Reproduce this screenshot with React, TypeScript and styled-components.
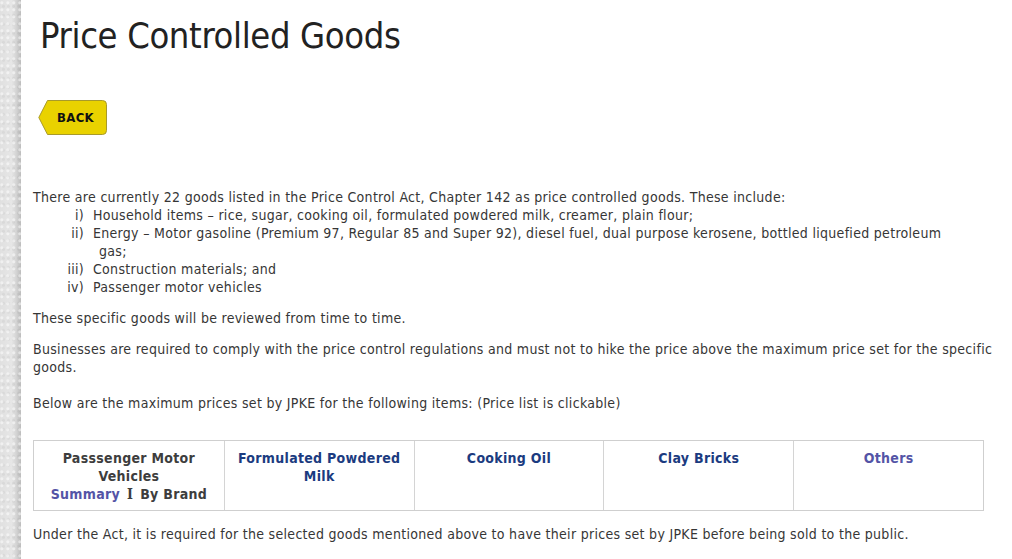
import React from "react";
import styled, { createGlobalStyle } from "styled-components";

const Global = createGlobalStyle`
  html, body { margin: 0; padding: 0; background: #fff; }
  body { font-family: "DejaVu Sans", Verdana, sans-serif; }
`;

const Page = styled.div`
  display: flex;
  min-height: 559px;
`;

const Strip = styled.div`
  flex: 0 0 21px;
  background:
    radial-gradient(circle at 30% 40%, rgba(255,255,255,0.5) 0 1px, transparent 2px) 0 0 / 6px 7px,
    radial-gradient(circle at 70% 70%, rgba(0,0,0,0.04) 0 1px, transparent 2px) 0 0 / 5px 9px,
    linear-gradient(to right, #e0e0e0 0, #e6e6e6 55%, #d2d2d2 80%, #bcbcbc 100%);
`;

const Content = styled.main`
  flex: 1;
  padding: 0 4px 0 12px;
  color: #363636;
  font-size: 14px;
  line-height: 18px;
  font-stretch: condensed;
  letter-spacing: 0.3px;
`;

const Title = styled.h1`
  margin: 14px 0 0 7px;
  font-size: 36px;
  line-height: 44px;
  font-weight: normal;
  letter-spacing: -0.35px;
  color: #222;
`;

const BackButton = styled.button`
  position: relative;
  margin: 42px 0 0 5px;
  width: 69px;
  height: 35px;
  padding: 0 0 0 6px;
  border: none;
  background: transparent;
  font-family: inherit;
  font-stretch: condensed;
  font-weight: bold;
  font-size: 13px;
  letter-spacing: 0.3px;
  color: #111;
  cursor: pointer;
  display: block;
`;

const ButtonShape = styled.svg`
  position: absolute;
  inset: 0;
  z-index: 0;
`;

const ButtonLabel = styled.span`
  position: relative;
  z-index: 1;
`;

const Para = styled.p<{ $top?: number }>`
  margin: ${(p) => p.$top ?? 13}px 0 0;
`;

const List = styled.div`
  display: flex;
  flex-direction: column;
`;

const Item = styled.div`
  display: flex;
`;

const Marker = styled.span`
  flex: 0 0 51px;
  text-align: right;
`;

const ItemText = styled.span`
  padding-left: 15px;
  text-indent: -6px;
`;

const Table = styled.div`
  margin-top: 28px;
  display: grid;
  grid-template-columns: repeat(5, 1fr);
  border: 1px solid #cfcfcf;
  width: 949px;
`;

const Cell = styled.div`
  padding: 8px 6px 7px;
  text-align: center;
  font-weight: bold;
  color: #3d3d3d;
  & + & { border-left: 1px solid #d4d4d4; }
`;

const Link = styled.a<{ $visited?: boolean }>`
  color: ${(p) => (p.$visited ? "#5454a6" : "#1b3b80")};
  text-decoration: none;
`;

const SerifI = styled.span`
  font-family: "DejaVu Serif", serif;
  font-stretch: condensed;
  margin: 0 7px;
`;

export default function App() {
  return (
    <>
      <Global />
      <Page>
        <Strip />
        <Content>
          <Title>Price Controlled Goods</Title>
          <BackButton>
            <ButtonShape viewBox="0 0 69 35" width="69" height="35">
              <path
                d="M9.5 0.5 H64.5 Q68.5 0.5 68.5 4.5 V30.5 Q68.5 34.5 64.5 34.5 H9.5 L0.8 17.5 Z"
                fill="#e9d200"
                stroke="#a89a2a"
                strokeWidth="1"
              />
            </ButtonShape>
            <ButtonLabel>BACK</ButtonLabel>
          </BackButton>
          <Para $top={53}>
            There are currently 22 goods listed in the Price Control Act, Chapter 142 as price controlled goods. These include:
          </Para>
          <List>
            <Item>
              <Marker>i)</Marker>
              <ItemText>Household items – rice, sugar, cooking oil, formulated powdered milk, creamer, plain flour;</ItemText>
            </Item>
            <Item>
              <Marker>ii)</Marker>
              <ItemText>
                Energy – Motor gasoline (Premium 97, Regular 85 and Super 92), diesel fuel, dual purpose kerosene, bottled liquefied petroleum
                <br />
                gas;
              </ItemText>
            </Item>
            <Item>
              <Marker>iii)</Marker>
              <ItemText>Construction materials; and</ItemText>
            </Item>
            <Item>
              <Marker>iv)</Marker>
              <ItemText>Passenger motor vehicles</ItemText>
            </Item>
          </List>
          <Para>These specific goods will be reviewed from time to time.</Para>
          <Para>
            Businesses are required to comply with the price control regulations and must not to hike the price above the maximum price set for the specific goods.
          </Para>
          <Para $top={18}>
            Below are the maximum prices set by JPKE for the following items: (Price list is clickable)
          </Para>
          <Table>
            <Cell>
              Passsenger Motor Vehicles
              <br />
              <Link $visited href="#">Summary</Link>
              <SerifI>I</SerifI>
              By Brand
            </Cell>
            <Cell>
              <Link href="#">Formulated Powdered Milk</Link>
            </Cell>
            <Cell>
              <Link href="#">Cooking Oil</Link>
            </Cell>
            <Cell>
              <Link href="#">Clay Bricks</Link>
            </Cell>
            <Cell>
              <Link $visited href="#">Others</Link>
            </Cell>
          </Table>
          <Para $top={14}>
            Under the Act, it is required for the selected goods mentioned above to have their prices set by JPKE before being sold to the public.
          </Para>
        </Content>
      </Page>
    </>
  );
}
